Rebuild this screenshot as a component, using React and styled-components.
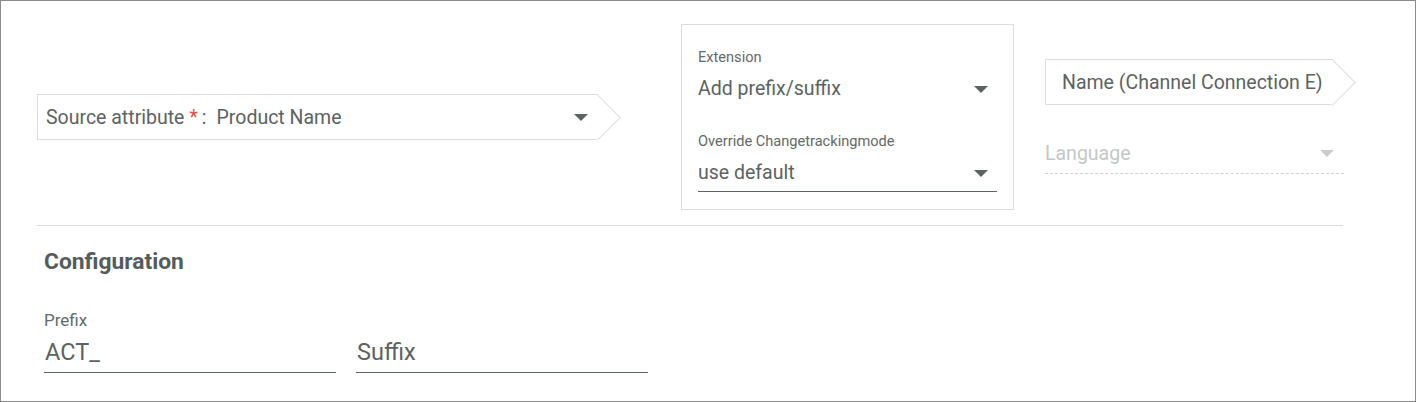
import React from "react";
import styled, { createGlobalStyle } from "styled-components";

const Global = createGlobalStyle`
  html, body { margin: 0; padding: 0; background: #fff; }
  body { font-family: Roboto, "Liberation Sans", Arial, sans-serif; color: #5b6363; }
  * { box-sizing: border-box; }
`;

const Frame = styled.div`
  width: 1416px;
  height: 402px;
  border: 1px solid #8c8c8c;
  background: #fff;
`;

const TopRow = styled.div`
  display: flex;
  align-items: center;
  padding: 23px 0 0 36px;
`;

const ArrowBox = styled.div`
  position: relative;
  display: flex;
  align-items: center;
  flex-shrink: 0;
  width: ${(p) => p.width}px;
  height: 46px;
  padding: 0 8px 0 ${(p) => p.padLeft || 8}px;
  border: 1px solid #dcdcdc;
  border-right: none;
  background: #fff;
  font-size: 19.5px;
  white-space: nowrap;
  &::after {
    content: "";
    position: absolute;
    right: -16px;
    top: 50%;
    width: 32px;
    height: 32px;
    margin-top: -16px;
    border-top: 1px solid #dcdcdc;
    border-right: 1px solid #dcdcdc;
    background: #fff;
    transform: rotate(45deg);
  }
`;

const BoxText = styled.span`
  position: relative;
  z-index: 1;
`;

const Req = styled.span`
  color: #e04a3f;
  margin: 0 4px 0 5px;
`;

const Value = styled.span`
  margin-left: 10px;
`;

const Grow = styled.span`
  flex: 1;
`;

const Caret = styled.span`
  position: relative;
  z-index: 1;
  display: inline-block;
  flex-shrink: 0;
  width: 0;
  height: 0;
  border-left: 7px solid transparent;
  border-right: 7px solid transparent;
  border-top: 7px solid ${(p) => (p.faded ? "#c9cdcd" : "#5b6363")};
  margin-right: ${(p) => p.mr || 0}px;
`;

const Panel = styled.div`
  flex-shrink: 0;
  width: 333px;
  margin-left: 83px;
  padding: 24px 16px 17px;
  border: 1px solid #dcdcdc;
`;

const Label = styled.div`
  font-size: 14.6px;
  line-height: 17px;
  color: #636a6a;
  margin-bottom: 11px;
`;

const SelectRow = styled.div`
  display: flex;
  align-items: center;
  height: ${(p) => (p.underline ? 31 : 24)}px;
  padding-bottom: ${(p) => (p.underline ? 6 : 0)}px;
  font-size: 19.5px;
  line-height: 24px;
  border-bottom: ${(p) => (p.underline ? "1px solid #5b6363" : "none")};
  margin-bottom: ${(p) => p.mb || 0}px;
`;

const RightCol = styled.div`
  display: flex;
  flex-direction: column;
  margin-left: 31px;
  padding-bottom: 1px;
`;

const LangRow = styled.div`
  display: flex;
  align-items: center;
  width: 299px;
  height: 32px;
  margin-top: 37px;
  padding-bottom: 8px;
  font-size: 19.5px;
  color: #c3c8c8;
  border-bottom: 1px dashed #cfd3d3;
`;

const Divider = styled.hr`
  margin: 15px 0 0 36px;
  width: 1306px;
  border: none;
  border-top: 1px solid #dcdcdc;
`;

const Config = styled.div`
  padding: 22px 0 0 43px;
`;

const Title = styled.h3`
  margin: 0;
  font-size: 22.8px;
  line-height: 28px;
  font-weight: 700;
  color: #555c5c;
`;

const Fields = styled.div`
  display: flex;
  gap: 20px;
  margin-top: 34px;
`;

const Field = styled.div`
  width: 292px;
  display: flex;
  flex-direction: column;
  justify-content: flex-end;
  height: 63px;
`;

const FieldLabel = styled.div`
  font-size: 17px;
  line-height: 20px;
  color: #636a6a;
  margin-bottom: 8px;
`;

const Input = styled.div`
  font-size: 23.5px;
  line-height: 28px;
  padding: 0 1px 6px;
  border-bottom: 1px solid #5b6363;
`;

export default function App() {
  return (
    <Frame>
      <Global />
      <TopRow>
        <ArrowBox width={561}>
          <BoxText>
            Source attribute<Req>*</Req>:<Value>Product Name</Value>
          </BoxText>
          <Grow />
          <Caret mr={2} />
        </ArrowBox>
        <Panel>
          <Label>Extension</Label>
          <SelectRow mb={32}>
            Add prefix/suffix
            <Grow />
            <Caret mr={9} />
          </SelectRow>
          <Label>Override Changetrackingmode</Label>
          <SelectRow underline>
            use default
            <Grow />
            <Caret mr={9} />
          </SelectRow>
        </Panel>
        <RightCol>
          <ArrowBox width={288} padLeft={16}>
            <BoxText>Name (Channel Connection E)</BoxText>
          </ArrowBox>
          <LangRow>
            Language
            <Grow />
            <Caret faded mr={10} />
          </LangRow>
        </RightCol>
      </TopRow>
      <Divider />
      <Config>
        <Title>Configuration</Title>
        <Fields>
          <Field>
            <FieldLabel>Prefix</FieldLabel>
            <Input>ACT_</Input>
          </Field>
          <Field>
            <Input>Suffix</Input>
          </Field>
        </Fields>
      </Config>
    </Frame>
  );
}
